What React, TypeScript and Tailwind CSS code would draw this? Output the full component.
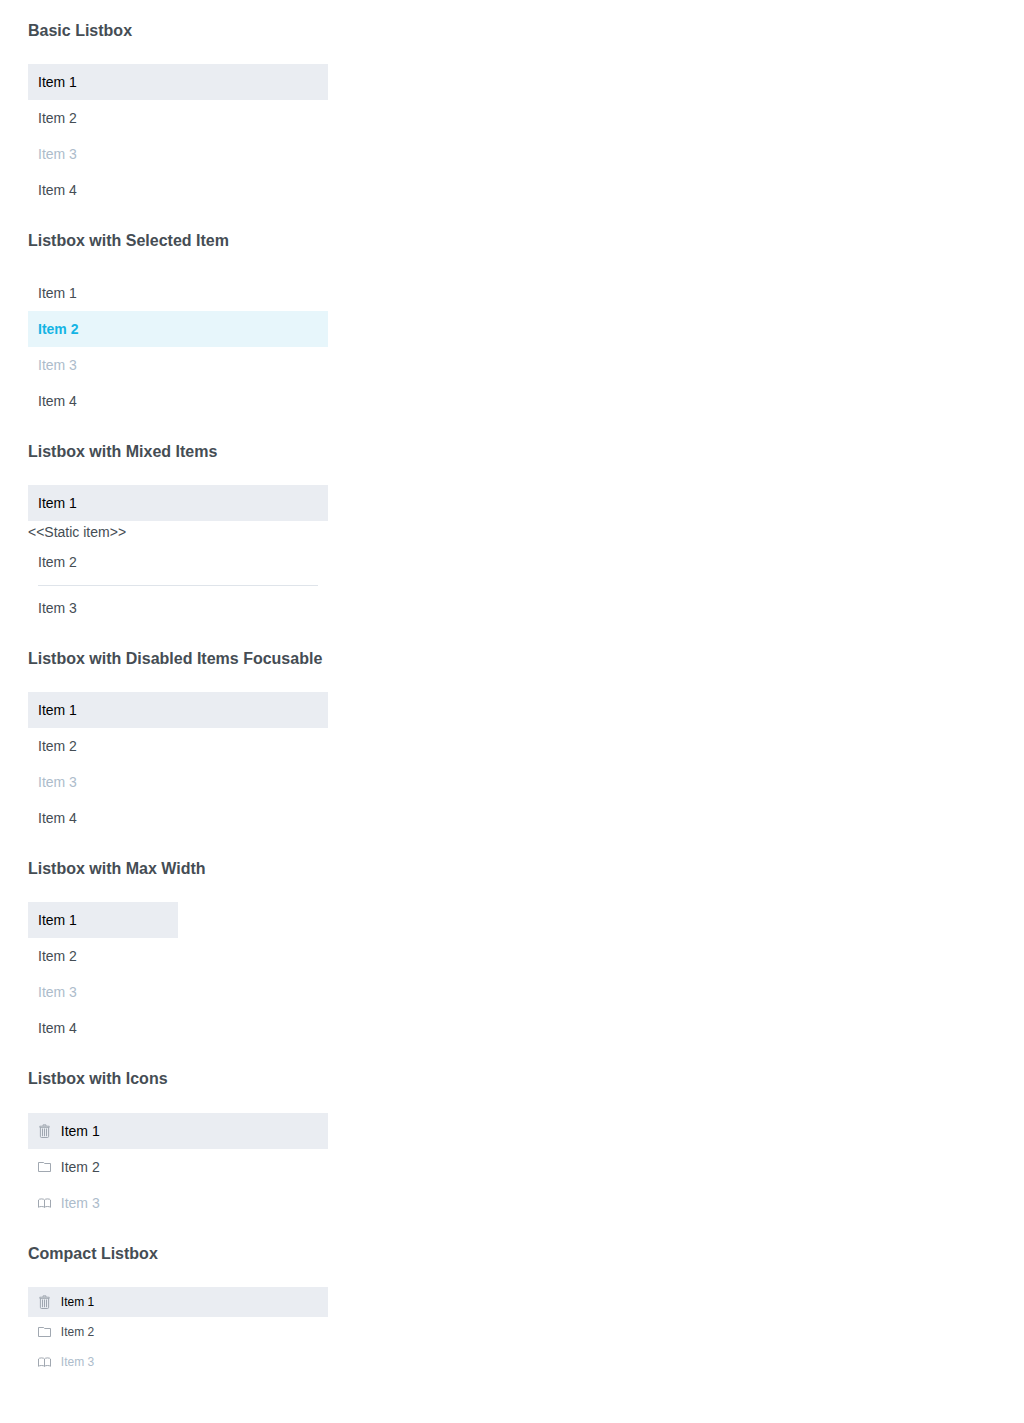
import React from "react";

type IconName = "trash" | "folder" | "book";
type State = "normal" | "focused" | "selected" | "disabled";

interface Item {
  label: string;
  state?: State;
  icon?: IconName;
  kind?: "item" | "static" | "divider";
}

const itemColors: Record<State, string> = {
  normal: "text-[#454d54]",
  focused: "bg-[#eaedf2] text-black",
  selected: "bg-[#e7f6fb] font-bold text-[#14b4e4]",
  disabled: "text-[#adbccb]",
};

function Icon({ name }: { name: IconName }) {
  return (
    <svg
      className="mr-[9.8px] h-4 w-[13px] shrink-0"
      viewBox="0 0 13 16"
      fill="none"
      stroke="#969ea8"
      strokeWidth="0.9"
    >
      {name === "trash" && (
        <>
          <path d="M5 2.8V1.9H8V2.8" />
          <path d="M1.8 3.2H11.2V4.4H1.8Z" strokeWidth="0.8" />
          <path d="M2.4 4.5V13.4Q2.4 14.5 3.4 14.5H9.6Q10.6 14.5 10.6 13.4V4.5" />
          <path d="M4.5 5.5V13.2M6.5 5.5V13.2M8.5 5.5V13.2" strokeWidth="0.9" />
        </>
      )}
      {name === "folder" && <path d="M0.5 12.5V3.5H5.6L6.6 4.5H12.5V12.5Z" />}
      {name === "book" && (
        <path d="M6.5 12.6V5Q6 3.9 3.5 3.9T0.5 5V12.3Q1.5 11.5 3.5 11.5T6.5 12.2Q7.5 11.5 9.5 11.5T12.5 12.3V5Q12 3.9 9.5 3.9T6.5 5" />
      )}
    </svg>
  );
}

interface ListboxProps {
  title: string;
  items: Item[];
  heading?: string;
  width?: string;
  compact?: boolean;
}

function Listbox({
  title,
  items,
  heading = "h-[66px] leading-[66px]",
  width = "w-[300px]",
  compact = false,
}: ListboxProps) {
  return (
    <section>
      <h3 className={`text-base font-bold text-[#454d54] ${heading}`}>{title}</h3>
      <ul role="listbox" className={width}>
        {items.map((item, i) => {
          if (item.kind === "static")
            return (
              <li key={i} className="h-[23px] text-sm leading-[22px] text-[#454d54]">
                {item.label}
              </li>
            );
          if (item.kind === "divider")
            return <li key={i} role="separator" className="mx-2.5 mt-[5px] mb-1 h-px bg-[#dfe4ea]" />;
          return (
            <li
              key={i}
              role="option"
              aria-selected={item.state === "selected"}
              className={`flex items-center px-2.5 ${compact ? "h-[30px] text-xs" : "h-9 text-sm"} ${itemColors[item.state ?? "normal"]}`}
            >
              {item.icon && <Icon name={item.icon} />}
              {item.label}
            </li>
          );
        })}
      </ul>
    </section>
  );
}

const basic: Item[] = [
  { label: "Item 1", state: "focused" },
  { label: "Item 2" },
  { label: "Item 3", state: "disabled" },
  { label: "Item 4" },
];

const selected: Item[] = [
  { label: "Item 1" },
  { label: "Item 2", state: "selected" },
  { label: "Item 3", state: "disabled" },
  { label: "Item 4" },
];

const mixed: Item[] = [
  { label: "Item 1", state: "focused" },
  { label: "<<Static item>>", kind: "static" },
  { label: "Item 2" },
  { label: "", kind: "divider" },
  { label: "Item 3" },
];

const withIcons: Item[] = [
  { label: "Item 1", state: "focused", icon: "trash" },
  { label: "Item 2", icon: "folder" },
  { label: "Item 3", state: "disabled", icon: "book" },
];

export default function App() {
  return (
    <main className="min-h-[1423px] bg-white px-7 font-['Liberation_Sans',Arial,sans-serif]">
      <Listbox title="Basic Listbox" items={basic} heading="h-16 leading-[62px]" />
      <Listbox title="Listbox with Selected Item" items={selected} heading="h-[67px] leading-[66px]" />
      <Listbox title="Listbox with Mixed Items" items={mixed} />
      <Listbox title="Listbox with Disabled Items Focusable" items={basic} />
      <Listbox title="Listbox with Max Width" items={basic} width="w-[150px]" />
      <Listbox title="Listbox with Icons" items={withIcons} heading="h-[67px] leading-[66px]" />
      <Listbox title="Compact Listbox" items={withIcons} compact />
    </main>
  );
}
